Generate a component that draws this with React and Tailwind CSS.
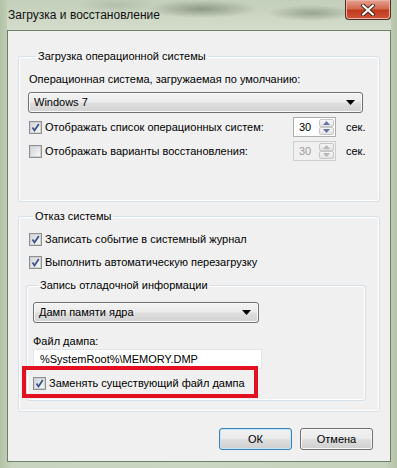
const CheckBox = ({ checked }) => (
  <span className="flex h-[13px] w-[13px] shrink-0 items-center justify-center border border-[#8e8f8f] bg-white">
    <span className="flex h-[11px] w-[11px] items-center justify-center border border-[#cfd2d6] bg-[linear-gradient(135deg,#d3d6db,#f7f7f7)]">
      {checked && (
        <svg width="9" height="9" viewBox="0 0 9 9">
          <path d="M1.5 4.5 L3.5 7.5 L7.8 1" fill="none" stroke="#3e4f85" strokeWidth="1.7" />
        </svg>
      )}
    </span>
  </span>
);

const CheckRow = ({ checked, label }) => (
  <div className="flex h-[16px] items-center gap-[3px]">
    <CheckBox checked={checked} />
    <span className="whitespace-nowrap">{label}</span>
  </div>
);

const Combo = ({ value, width }) => (
  <div
    className={`flex h-[21px] items-center justify-between rounded-[3px] border border-[#707070] bg-[linear-gradient(#f3f3f3_0%,#ececec_45%,#dedede_55%,#d2d2d2_100%)] pl-[5px] pr-[7px] shadow-[inset_0_0_0_1px_#fafafa] ${width}`}
  >
    <span>{value}</span>
    <svg width="9" height="5" viewBox="0 0 9 5">
      <path d="M0 0 H9 L4.5 5 Z" fill="#000" />
    </svg>
  </div>
);

const Arrow = ({ up, color }) => (
  <svg width="7" height="4" viewBox="0 0 7 4">
    <path d={up ? "M0 4 H7 L3.5 0 Z" : "M0 0 H7 L3.5 4 Z"} fill={color} />
  </svg>
);

const Spin = ({ disabled }) => (
  <div
    className={`flex h-[20px] w-[43px] border ${
      disabled ? "border-[#cfcfcf] bg-[#f0f0f0] text-[#9a9a9a]" : "border-[#abadb3] bg-white text-black"
    }`}
  >
    <span className="flex-1 pl-[5px] leading-[18px]">30</span>
    <div className="my-[1px] mr-[1px] flex w-[15px] flex-col">
      <span className="flex flex-1 items-center justify-center rounded-[2px] border border-[#c7c7c7] bg-[linear-gradient(#f6f6f6,#e3e3e3)]">
        <Arrow up color={disabled ? "#b7b7b7" : "#6274a8"} />
      </span>
      <span className="flex flex-1 items-center justify-center rounded-[2px] border border-[#c7c7c7] bg-[linear-gradient(#f6f6f6,#e3e3e3)]">
        <Arrow color={disabled ? "#b7b7b7" : "#6274a8"} />
      </span>
    </div>
  </div>
);

const SpinRow = ({ checked, label, disabled }) => (
  <div className="flex h-[20px] items-center">
    <div className="w-[264px]">
      <CheckRow checked={checked} label={label} />
    </div>
    <Spin disabled={disabled} />
    <span className="ml-[10px]">сек.</span>
  </div>
);

const Button = ({ label, primary }) => (
  <button
    type="button"
    className={`h-[22px] w-[73px] rounded-[3px] border bg-[linear-gradient(#f2f2f2_0%,#ebebeb_45%,#dddddd_55%,#cfcfcf_100%)] ${
      primary
        ? "border-[#3c7fb1] shadow-[inset_0_0_0_1px_#bfe6fb]"
        : "border-[#707070] shadow-[inset_0_0_0_1px_#f8f8f8]"
    }`}
  >
    {label}
  </button>
);

export default function App() {
  return (
    <div className="flex h-[468px] w-[397px] flex-col overflow-hidden bg-[linear-gradient(90deg,#b3c3a6_0%,#c8d4bf_3%,#cbd6c2_50%,#c6d2bc_97%,#b5c4a9_100%)] pb-[6px] pl-[7px] pr-[6px] font-['Liberation_Sans',Arial,sans-serif] text-[12px] leading-[15px] text-black">
      <div className="flex h-[30px] items-start justify-between bg-[radial-gradient(ellipse_55px_9px_at_195px_9px,#8e9a86,transparent),radial-gradient(ellipse_45px_8px_at_305px_13px,#98a48f,transparent),radial-gradient(ellipse_40px_8px_at_110px_5px,#b3bfaa,transparent),linear-gradient(#c3cfba,#cdd7c4_60%,#d5decc)]">
        <span className="mt-[8px] pl-[1px] text-[12px] text-[#111]">Загрузка и восстановление</span>
        <div className="flex h-[20px] w-[46px] items-center justify-center rounded-b-[4px] border border-t-0 border-[#4b2d25] bg-[linear-gradient(#e7a393_0%,#d46a51_45%,#c2391c_55%,#d0553a_100%)] shadow-[inset_0_0_0_1px_#eab3a5]">
          <svg width="14" height="12" viewBox="0 0 14 12">
            <path d="M2 1.5 L12 10.5 M12 1.5 L2 10.5" stroke="#4a2219" strokeWidth="4" strokeLinecap="round" />
            <path d="M2 1.5 L12 10.5 M12 1.5 L2 10.5" stroke="#fff" strokeWidth="2.2" strokeLinecap="round" />
          </svg>
        </div>
      </div>

      <div className="flex flex-1 flex-col border border-[#6f7f6c] bg-[#f0f0f0] px-[10px] text-[11px]">
        <fieldset className="mt-[18px] rounded-[3px] border border-[#d5dfe5] pb-[40px] pl-[10px] pr-[8px] pt-[8px] shadow-[inset_0_0_0_1px_#fff]">
          <legend className="ml-[7px] px-[2px]">Загрузка операционной системы</legend>
          <div>Операционная система, загружаемая по умолчанию:</div>
          <div className="ml-[-1px] mt-[5px]">
            <Combo value="Windows 7" width="w-[335px]" />
          </div>
          <div className="mt-[4px]">
            <SpinRow checked label="Отображать список операционных систем:" />
          </div>
          <div className="mt-[4px]">
            <SpinRow label="Отображать варианты восстановления:" disabled />
          </div>
        </fieldset>

        <fieldset className="mt-[7px] rounded-[3px] border border-[#d5dfe5] pb-[10px] pl-[7px] pr-[13px] pt-[7px] shadow-[inset_0_0_0_1px_#fff]">
          <legend className="ml-[7px] px-[2px]">Отказ системы</legend>
          <div className="pl-[3px]">
            <CheckRow checked label="Записать событие в системный журнал" />
          </div>
          <div className="mt-[7px] pl-[3px]">
            <CheckRow checked label="Выполнить автоматическую перезагрузку" />
          </div>

          <fieldset className="mt-[8px] rounded-[3px] border border-[#d5dfe5] pb-[9px] pl-[6px] pt-[9px] shadow-[inset_0_0_0_1px_#fff]">
            <legend className="ml-[5px] px-[2px]">Запись отладочной информации</legend>
            <Combo value="Дамп памяти ядра" width="w-[226px]" />
            <div className="mt-[11px]">Файл дампа:</div>
            <div className="flex h-[20px] w-[229px] items-center border border-[#e2e6ea] bg-white pl-[6px]">
              %SystemRoot%\MEMORY.DMP
            </div>
            <div className="relative mt-[6px]">
              <CheckRow checked label="Заменять существующий файл дампа" />
              <div className="absolute left-[-11px] top-[-9px] h-[32px] w-[236px] border-4 border-[#e3101f]" />
            </div>
          </fieldset>
        </fieldset>

        <div className="mt-[16px] flex justify-end gap-[8px] pr-[7px]">
          <Button label="ОК" primary />
          <Button label="Отмена" />
        </div>
      </div>
    </div>
  );
}
